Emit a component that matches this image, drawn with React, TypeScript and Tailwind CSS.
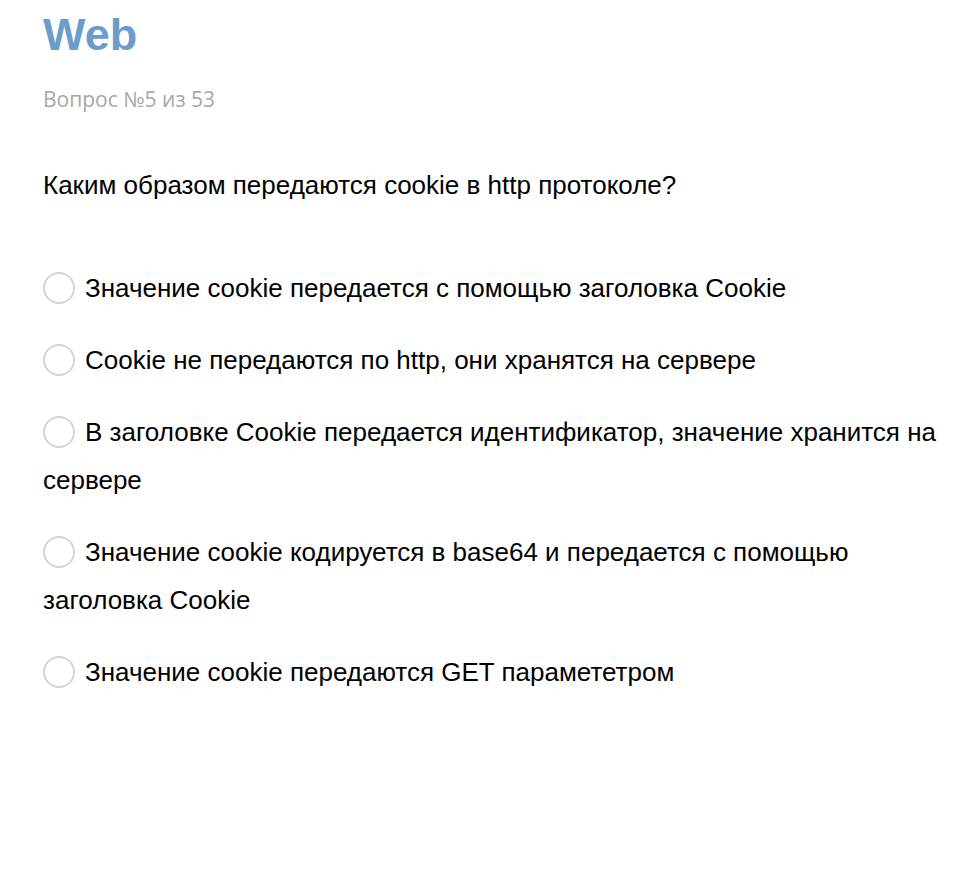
import React from 'react';

const options = [
  'Значение cookie передается с помощью заголовка Cookie',
  'Cookie не передаются по http, они хранятся на сервере',
  'В заголовке Cookie передается идентификатор, значение хранится на сервере',
  'Значение cookie кодируется в base64 и передается с помощью заголовка Cookie',
  'Значение cookie передаются GET парамететром',
];

const App: React.FC = () => {
  return (
    <div className="min-h-screen bg-white pl-[43px] pr-[10px] pt-[7px]" style={{ fontFamily: '"Liberation Sans", Arial, sans-serif' }}>
      {/* Header */}
      <h1 className="text-[45px] font-bold leading-[56px] text-[#6b9ccc]">
        Web
      </h1>
      <p className="mt-[24px] text-[21px] leading-[24px] text-[#a8a8a8]" style={{ fontFamily: '"Open Sans", sans-serif' }}>
        Вопрос №5 из 53
      </p>

      {/* Question */}
      <p className="mt-[59px] text-[26px] leading-[30px] text-black">
        Каким образом передаются cookie в http протоколе?
      </p>

      {/* Options */}
      <div className="mt-[64px] flex flex-col gap-[24px]">
        {options.map((opt, i) => (
          <label key={i} className="block text-[26px] leading-[48px] text-black cursor-pointer">
            <span className="inline-block align-middle w-[32px] h-[32px] rounded-full border-2 border-[#d4d4d4] bg-white mr-[10px] -mt-[4px]" />
            {opt}
          </label>
        ))}
      </div>
    </div>
  );
};

export default App;
